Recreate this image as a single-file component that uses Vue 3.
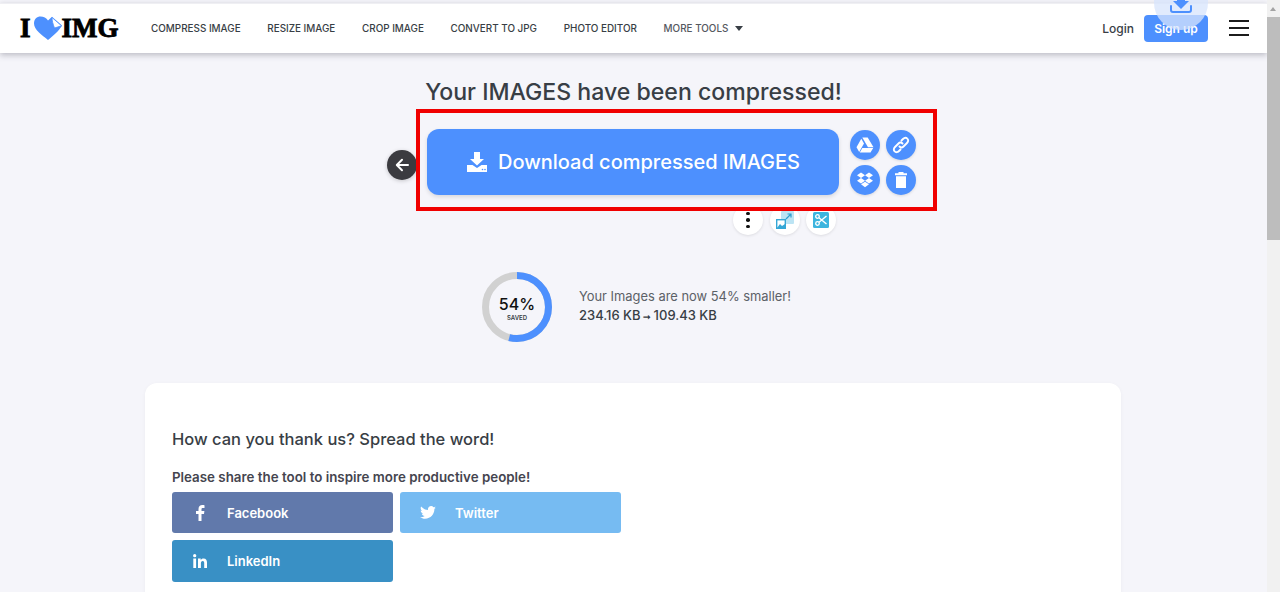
<script setup>
const navLinks = ["Compress image", "Resize image", "Crop image", "Convert to JPG", "Photo editor"];
</script>

<template>
  <div class="page">
    <div class="viewport">
      <header class="topbar">
        <div class="logo">
          <span>I</span>
          <svg class="heart" viewBox="0 0 30 24" width="30" height="24">
            <path d="M15 24C9 19 1 14 1 7.500C1 3 4 0.500 7.500 0.500C10.500 0.500 13.500 2 15 4.500L19 0.800L29 9.500C26 15 20 20 15 24Z" fill="#4d90fe" />
            <path d="M19 1.500L28.500 9.800L21.500 12C20 8 19 5 19 1.500Z" fill="#fff" stroke="#4d90fe" stroke-width="0.800" />
          </svg>
          <span>IMG</span>
        </div>
        <nav class="nav">
          <a v-for="link in navLinks" :key="link">{{ link }}</a>
          <a class="more">More tools <i class="caret"></i></a>
        </nav>
        <div class="account">
          <a class="login">Login</a>
          <a class="signup">Sign up</a>
          <div class="burger"><i></i><i></i><i></i></div>
        </div>
        <div class="float-download">
          <svg viewBox="0 0 26 26" width="26" height="26">
            <path d="M9 0H17V9H21L13 17L5 9H9Z" fill="#4d90fe" />
            <path d="M3 14V18C3 19.500 4 20 5 20H21C22 20 23 19.500 23 18V14" fill="none" stroke="#4d90fe" stroke-width="2" stroke-linecap="round" />
          </svg>
        </div>
      </header>

      <main class="content">
        <h1 class="title">Your IMAGES have been compressed!</h1>

        <div class="actions">
          <button class="back">
            <svg viewBox="0 0 16 16" width="16" height="16">
              <path d="M14 8H3M8 2.800L2.800 8L8 13.200" fill="none" stroke="#fff" stroke-width="2" stroke-linecap="round" stroke-linejoin="round" />
            </svg>
          </button>
          <div class="highlight">
            <a class="download">
              <svg viewBox="0 0 22 22" width="22" height="22">
                <path d="M8 1H14V8H18L11 14.500L4 8H8Z" fill="#fff" />
                <path d="M1 14H6.500L11 17L15.500 14H21V21H1Z" fill="#fff" />
                <circle cx="16.500" cy="18.500" r="0.800" fill="#4d90fe" />
                <circle cx="19" cy="18.500" r="0.800" fill="#4d90fe" />
              </svg>
              Download compressed IMAGES
            </a>
            <div class="mini-grid">
              <a class="mini">
                <svg viewBox="0 0 18 16" width="18" height="16">
                  <path d="M6.300 0.500H11.700L17.500 10.300H12L6.300 0.500Z" fill="#fff" />
                  <path d="M5.300 1.800L8 6.600L3.200 15L0.500 10.300Z" fill="#fff" />
                  <path d="M6.300 11H17.200L14.500 15.500H3.800Z" fill="#fff" />
                </svg>
              </a>
              <a class="mini">
                <svg viewBox="0 0 18 18" width="18" height="18">
                  <path d="M7.500 10.500C9 12 10.500 11.500 11.500 10.500L15 7C16.500 5.500 16.500 3.700 15.300 2.600C14.200 1.500 12.500 1.500 11 3L9.500 4.500M10.500 7.500C9 6 7.500 6.500 6.500 7.500L3 11C1.500 12.500 1.500 14.300 2.700 15.400C3.800 16.500 5.500 16.500 7 15L8.500 13.500" fill="none" stroke="#fff" stroke-width="1.900" stroke-linecap="round" />
                </svg>
              </a>
              <a class="mini">
                <svg viewBox="0 0 18 16" width="18" height="16">
                  <path d="M5 0.500L9 3.200L5 6L1 3.200ZM13 0.500L17 3.200L13 6L9 3.200ZM5 6L9 8.700L5 11.500L1 8.700ZM13 6L17 8.700L13 11.500L9 8.700ZM5 12.300L9 9.700L13 12.300L9 15.200Z" fill="#fff" />
                </svg>
              </a>
              <a class="mini">
                <svg viewBox="0 0 16 18" width="16" height="18">
                  <path d="M5.500 1H10.500V2.300H14V4.300H2V2.300H5.500ZM3 5.300H13V17H3Z" fill="#fff" />
                </svg>
              </a>
            </div>
          </div>
        </div>

        <div class="tools">
          <a class="tool">
            <span class="dots"><i></i><i></i><i></i></span>
          </a>
          <a class="tool">
            <svg viewBox="0 0 18 18" width="18" height="18">
              <rect x="5" y="0" width="13" height="13" rx="1" fill="#bce4f4" />
              <path d="M10 8L15 3M11.500 3H15V6.500" fill="none" stroke="#2f9fd0" stroke-width="1.200" />
              <rect x="0.700" y="8.700" width="8.600" height="8.600" fill="#fff" stroke="#35a7d6" stroke-width="1.400" />
              <path d="M1 17L4 13L6 15L9 13V17Z" fill="#35a7d6" />
            </svg>
          </a>
          <a class="tool">
            <svg viewBox="0 0 16 16" width="16" height="16">
              <rect width="16" height="16" rx="1.500" fill="#3cb4de" />
              <circle cx="4.500" cy="4.500" r="1.800" fill="none" stroke="#fff" stroke-width="1.300" />
              <circle cx="4.500" cy="11.500" r="1.800" fill="none" stroke="#fff" stroke-width="1.300" />
              <path d="M6 5.700L13.500 12M6 10.300L13.500 4" stroke="#fff" stroke-width="1.400" />
            </svg>
          </a>
        </div>

        <section class="stats">
          <div class="ring">
            <svg viewBox="0 0 70 70" width="70" height="70">
              <circle cx="35" cy="35" r="31.500" fill="none" stroke="#d1d1d1" stroke-width="7" />
              <circle cx="35" cy="35" r="31.500" fill="none" stroke="#4d90fe" stroke-width="7" pathLength="100" stroke-dasharray="54 100" transform="rotate(-90 35 35)" />
            </svg>
            <div class="ring-text">
              <strong>54%</strong>
              <small>SAVED</small>
            </div>
          </div>
          <div class="stats-text">
            <p class="smaller">Your Images are now 54% smaller!</p>
            <p class="sizes">234.16 KB<span class="to">➞</span>109.43 KB</p>
          </div>
        </section>

        <section class="card">
          <h2>How can you thank us? Spread the word!</h2>
          <p class="share">Please share the tool to inspire more productive people!</p>
          <div class="socials">
            <a class="social fb">
              <svg viewBox="0 0 10 16" width="10" height="16"><path d="M6.500 16V9H9L9.400 6H6.500V4.300C6.500 3.400 6.800 2.900 8 2.900H9.500V0.200C9.200 0.100 8.300 0 7.300 0C5.100 0 3.500 1.400 3.500 3.900V6H1V9H3.500V16Z" fill="#fff" /></svg>
              Facebook
            </a>
            <a class="social tw">
              <svg viewBox="0 0 16 14" width="16" height="14"><path d="M16 1.700C15.400 2 14.800 2.100 14.100 2.200C14.800 1.800 15.300 1.200 15.500 0.400C14.900 0.800 14.200 1 13.500 1.200C12.900 0.500 12.100 0.100 11.200 0.100C9.100 0.100 7.600 2 8 4C5.300 3.900 2.900 2.600 1.100 0.600C0.300 2.100 0.700 3.900 2.100 4.800C1.600 4.800 1.100 4.700 0.700 4.400C0.600 5.900 1.700 7.300 3.200 7.600C2.700 7.700 2.200 7.800 1.700 7.700C2.100 8.900 3.200 9.800 4.700 9.900C3.300 10.900 1.700 11.400 0 11.200C1.500 12.100 3.200 12.700 5 12.700C11.100 12.700 14.600 7.500 14.400 2.900C15 2.500 15.600 2.100 16 1.700Z" fill="#fff" /></svg>
              Twitter
            </a>
            <a class="social li">
              <svg viewBox="0 0 14 14" width="14" height="14"><path d="M0.300 4.600H3.100V14H0.300ZM1.700 0A1.650 1.650 0 1 1 1.700 3.300A1.650 1.650 0 0 1 1.700 0ZM5 4.600H7.700V5.900C8.200 5 9.200 4.400 10.500 4.400C13.200 4.400 14 6 14 8.600V14H11.200V9.200C11.200 8 11 6.900 9.700 6.900C8.400 6.900 7.900 7.900 7.900 9.200V14H5Z" fill="#fff" /></svg>
              LinkedIn
            </a>
          </div>
        </section>
      </main>
    </div>

    <aside class="scrollbar">
      <span class="arrow"></span>
      <span class="thumb"></span>
    </aside>
  </div>
</template>

<style scoped>
.page {
  display: flex;
  height: 592px;
  overflow: hidden;
  background: #f5f5fa;
  font-family: Inter, "Liberation Sans", sans-serif;
  color: #383e45;
}
.viewport {
  flex: 1;
  min-width: 0;
}
.topbar {
  position: relative;
  display: flex;
  align-items: center;
  height: 50px;
  margin-top: 3px;
  padding: 0 18px 1px 20px;
  background: #fff;
  border-top: 1px solid #efeff3;
  box-sizing: border-box;
  box-shadow: 0 2px 6px rgba(72, 72, 90, 0.35);
}
.logo {
  display: flex;
  align-items: center;
  width: 131px;
  font-family: "Liberation Serif", serif;
  font-size: 27px;
  font-weight: 700;
  color: #000;
  -webkit-text-stroke: 0.9px #000;
}
.heart {
  margin: 0 -1px 0 2px;
}
.nav {
  display: flex;
  align-items: center;
  gap: 26.700px;
  font-size: 9.900px;
  font-weight: 500;
  text-transform: uppercase;
  color: #383e45;
}
.more {
  display: flex;
  align-items: center;
  gap: 7px;
  color: #55595f;
}
.caret {
  width: 0;
  height: 0;
  border-left: 4px solid transparent;
  border-right: 4px solid transparent;
  border-top: 5px solid #383e45;
}
.account {
  display: flex;
  align-items: center;
  margin-left: auto;
}
.login {
  font-size: 12px;
  font-weight: 500;
  margin-right: 10px;
}
.signup {
  display: flex;
  align-items: center;
  justify-content: center;
  width: 64px;
  height: 27px;
  border-radius: 4px;
  background: #4d90fe;
  color: #fff;
  font-size: 12px;
  font-weight: 600;
}
.burger {
  display: flex;
  flex-direction: column;
  gap: 5px;
  margin-left: 21px;
  width: 20px;
}
.burger i {
  display: block;
  height: 2px;
  background: #1c1c1c;
}
.float-download {
  position: absolute;
  left: 1154px;
  top: -32px;
  width: 54px;
  height: 58px;
  border-radius: 0 0 27px 27px;
  background: rgba(215, 228, 252, 0.75);
  display: flex;
  align-items: flex-end;
  justify-content: center;
  padding-bottom: 12.500px;
  box-sizing: border-box;
}
.content {
  display: flex;
  flex-direction: column;
}
.title {
  margin: 25px 0 0;
  font-size: 23.100px;
  line-height: 28px;
  font-weight: 500;
  text-align: center;
  color: #383e45;
}
.actions {
  display: flex;
  align-items: center;
  padding-left: 387px;
  margin-top: 3px;
}
.back {
  display: flex;
  align-items: center;
  justify-content: center;
  width: 30px;
  height: 30px;
  margin-top: 10px;
  padding: 0;
  border: none;
  border-radius: 50%;
  background: #3b3b40;
  box-shadow: 0 1px 4px rgba(0, 0, 0, 0.2);
}
.highlight {
  position: relative;
  z-index: 2;
  display: flex;
  align-items: center;
  gap: 11px;
  width: 521px;
  height: 102px;
  margin-left: -1px;
  padding: 4px 0 0 7px;
  box-sizing: border-box;
  border: 4px solid #f00000;
  background: #f5f5fa;
}
.download {
  display: flex;
  align-items: center;
  justify-content: center;
  gap: 10px;
  width: 412px;
  height: 66px;
  border-radius: 12px;
  background: #4d90fe;
  color: #fff;
  font-size: 20px;
  font-weight: 500;
  box-shadow: 0 2px 4px rgba(0, 0, 0, 0.12);
}
.mini-grid {
  display: grid;
  grid-template-columns: 30px 30px;
  grid-template-rows: 30px 30px;
  gap: 5px 6px;
}
.mini {
  display: flex;
  align-items: center;
  justify-content: center;
  border-radius: 50%;
  background: #4d90fe;
  box-shadow: 0 1px 3px rgba(0, 0, 0, 0.12);
}
.tools {
  display: flex;
  gap: 6.500px;
  margin: -6px 0 0 733px;
}
.tool {
  display: flex;
  align-items: center;
  justify-content: center;
  width: 30px;
  height: 30px;
  border-radius: 50%;
  background: #fff;
  box-shadow: 0 1px 3px rgba(0, 0, 0, 0.1);
}
.dots {
  display: flex;
  flex-direction: column;
  gap: 3px;
}
.dots i {
  display: block;
  width: 3.500px;
  height: 3.500px;
  border-radius: 50%;
  background: #111;
}
.stats {
  display: flex;
  align-items: center;
  gap: 27px;
  margin: 37px 0 0 482px;
}
.ring {
  position: relative;
  width: 70px;
  height: 70px;
}
.ring-text {
  position: absolute;
  inset: 0;
  display: flex;
  flex-direction: column;
  align-items: center;
  justify-content: center;
  padding-top: 2px;
  box-sizing: border-box;
}
.ring-text strong {
  font-size: 16px;
  line-height: 19px;
  font-weight: 500;
  color: #111;
}
.ring-text small {
  font-size: 6px;
  line-height: 8px;
  font-weight: 600;
  color: #383e45;
}
.stats-text {
  margin-top: -1px;
}
.stats-text p {
  margin: 0;
}
.smaller {
  font-size: 12.900px;
  line-height: 19px;
  color: #5c6167;
}
.sizes {
  font-size: 13px;
  line-height: 18px;
  font-weight: 500;
  color: #383e45;
}
.to {
  margin: 0 2.500px;
  font-size: 9px;
  font-weight: 700;
}
.card {
  width: 976px;
  height: 300px;
  margin: 41px 0 0 145px;
  padding: 45px 27px 0;
  box-sizing: border-box;
  background: #fff;
  border-radius: 12px;
  box-shadow: 0 1px 4px rgba(0, 0, 0, 0.04);
}
.card h2 {
  margin: 0;
  font-size: 16.500px;
  line-height: 22px;
  font-weight: 500;
  color: #383e45;
}
.share {
  margin: 17px 0 0;
  font-size: 13.350px;
  line-height: 20px;
  font-weight: 600;
  color: #45454f;
}
.socials {
  display: grid;
  grid-template-columns: 221px 221px;
  gap: 7px 7px;
  margin-top: 5px;
}
.social {
  display: flex;
  align-items: center;
  height: 41px;
  border-radius: 3px;
  color: #fff;
  font-size: 13px;
  font-weight: 600;
}
.social svg {
  width: 16px;
  margin: 0 19px 0 20px;
}
.fb {
  background: #6179ab;
}
.tw {
  background: #76bbf2;
}
.li {
  background: #3990c5;
  height: 42px;
}
.scrollbar {
  position: relative;
  flex: none;
  width: 13px;
  background: #f1f1f1;
}
.arrow {
  position: absolute;
  top: 7px;
  left: 3px;
  border-left: 3.500px solid transparent;
  border-right: 3.500px solid transparent;
  border-bottom: 4px solid #a3a3a3;
}
.thumb {
  position: absolute;
  top: 17px;
  left: 0;
  width: 13px;
  height: 223px;
  background: #bdbdbd;
}
</style>
